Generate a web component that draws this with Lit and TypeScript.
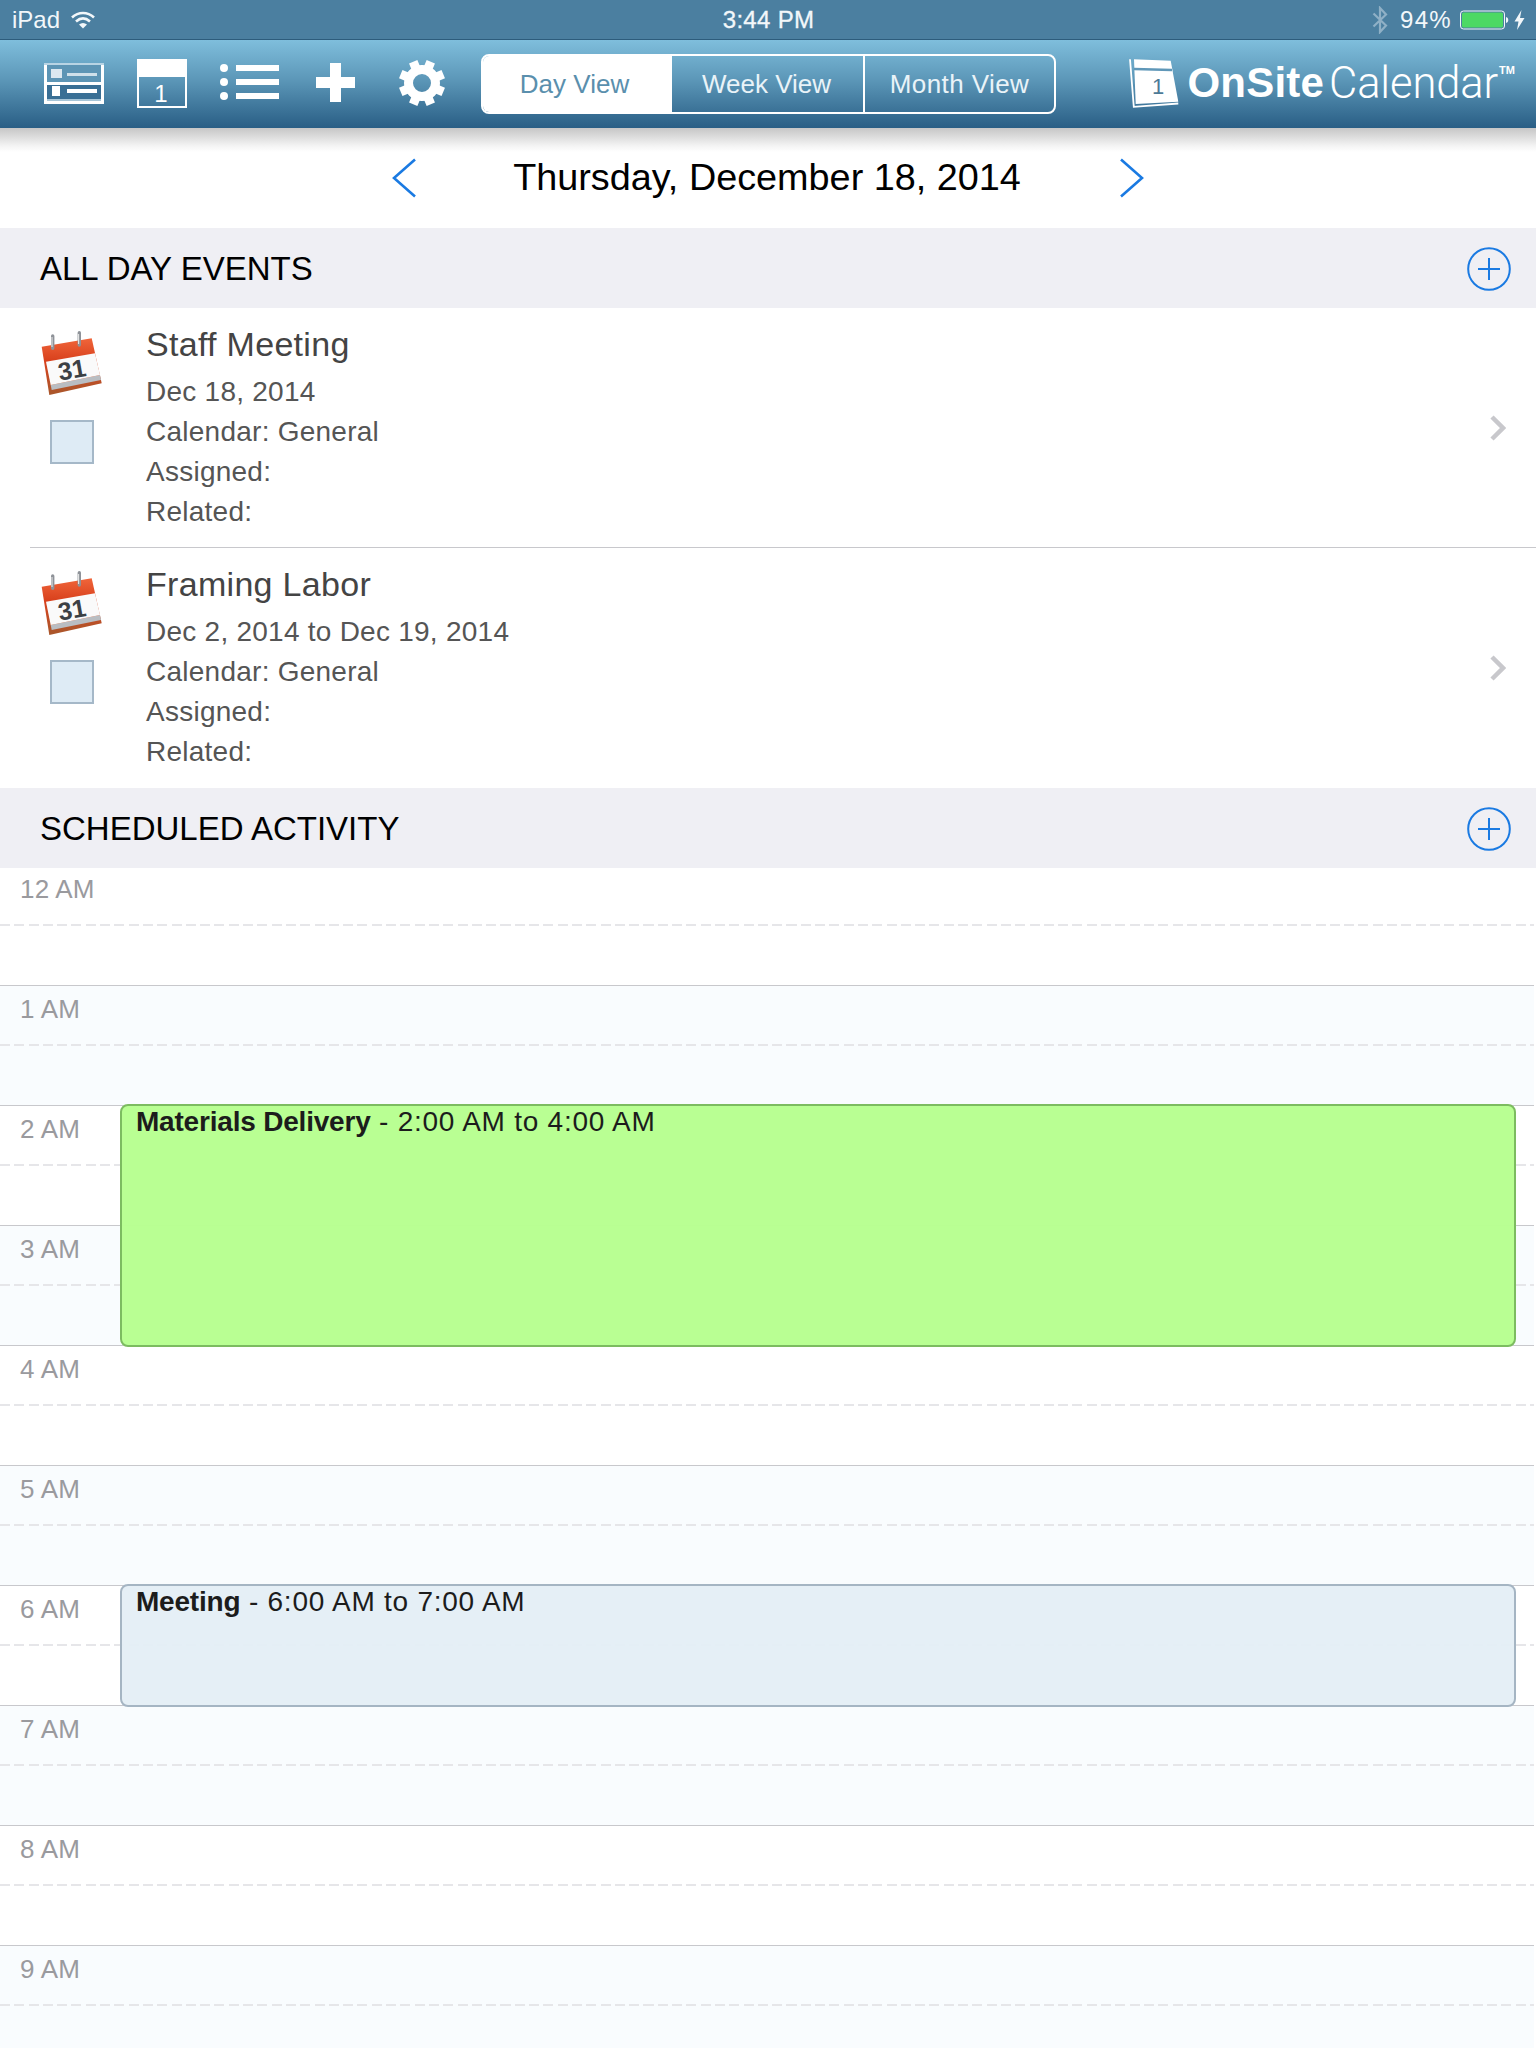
import { LitElement, html, css, svg } from 'lit'
import { customElement } from 'lit/decorators.js'

type AllDayEvent = { title: string; date: string }
type TimedEvent = { title: string; range: string; start: number; hours: number; kind: 'green' | 'blue' }

const ALL_DAY: AllDayEvent[] = [
  { title: 'Staff Meeting', date: 'Dec 18, 2014' },
  { title: 'Framing Labor', date: 'Dec 2, 2014 to Dec 19, 2014' }
]

const HOURS = ['12 AM', '1 AM', '2 AM', '3 AM', '4 AM', '5 AM', '6 AM', '7 AM', '8 AM', '9 AM']

const TIMED: TimedEvent[] = [
  { title: 'Materials Delivery', range: '2:00 AM to 4:00 AM', start: 2, hours: 2, kind: 'green' },
  { title: 'Meeting', range: '6:00 AM to 7:00 AM', start: 6, hours: 1, kind: 'blue' }
]

const HOUR_PX = 120

const plusIcon = html`
  <svg class="add" width="44" height="44" viewBox="0 0 44 44" fill="none" stroke="#1a7ae2">
    <circle cx="22" cy="22" r="20.8" stroke-width="2"></circle>
    <path d="M11 22H33M22 11V33" stroke-width="2"></path>
  </svg>
`

const eventIcon = html`
  <svg class="cal-icon" width="64" height="66" viewBox="0 0 64 66">
    <defs>
      <linearGradient id="red" x1="0" y1="0" x2="0" y2="1">
        <stop offset="0" stop-color="#f0653a"></stop>
        <stop offset="0.4" stop-color="#d8401c"></stop>
        <stop offset="1" stop-color="#a8582c"></stop>
      </linearGradient>
    </defs>
    <path d="M0.7 16.7L50.7 8.3L60.7 53.3L8.3 65Z" fill="url(#red)"></path>
    <path d="M9.7 55L59 45L60 50L10.7 60Z" fill="#b9bdc2"></path>
    <path d="M5 31.7L54 23.3L59 45L9.7 55Z" fill="#fafafa"></path>
    <path d="M11.7 6V18.3M38.3 2.7V15" stroke="#8e9298" stroke-width="3.4" stroke-linecap="round"></path>
    <path d="M11 7V17M37.6 4V14" stroke="#ececec" stroke-width="1"></path>
    <text x="31" y="48.5" text-anchor="middle" transform="rotate(-10 31 40)" class="cal-num">31</text>
  </svg>
`

const gearTeeth = [0, 45, 90, 135, 180, 225, 270, 315].map(
  a => svg`<rect x="18.5" y="0" width="9" height="9" transform="rotate(${a + 22.5} 23 23)"></rect>`
)

@customElement('app-root')
export class AppRoot extends LitElement {
  static styles = css`
    :host {
      display: block;
      height: 2048px;
      overflow: hidden;
      background: #fff;
      font-family: 'Liberation Sans', Arial, sans-serif;
      color: #000;
    }

    .status {
      box-sizing: border-box;
      height: 40px;
      display: grid;
      grid-template-columns: 1fr auto 1fr;
      align-items: center;
      padding: 0 11px 0 12px;
      background: #4b7fa0;
      border-bottom: 1px solid #2d5c7c;
      color: #f2f7fa;
      font-size: 24px;
    }
    .status-left,
    .status-right {
      display: flex;
      align-items: center;
    }
    .status-right {
      justify-content: flex-end;
    }
    .status-left svg {
      margin-left: 11px;
    }
    .time {
      letter-spacing: 0.3px;
      -webkit-text-stroke: 0.3px #f2f7fa;
    }
    .pct {
      margin: 0 8px 0 12px;
      letter-spacing: 1.3px;
    }
    .bolt {
      margin-left: 5px;
    }

    .toolbar {
      box-sizing: border-box;
      height: 88px;
      display: flex;
      align-items: center;
      padding: 0 21px 2px 44px;
      background: linear-gradient(#7fbedc, #5c97b8 45%, #295e85);
    }
    .toolbar > svg {
      flex: none;
    }
    .i-cal {
      margin-left: 33px;
    }
    .i-list {
      margin: 0 0 2px 33px;
    }
    .i-plus {
      margin: 0 0 2px 37px;
    }
    .i-gear {
      margin-left: 44px;
    }

    .segments {
      box-sizing: border-box;
      margin: 2px 0 0 36px;
      width: 575px;
      height: 60px;
      display: grid;
      grid-template-columns: 189px 191px 1fr;
      border: 2px solid #fff;
      border-radius: 8px;
      overflow: hidden;
      font-size: 26px;
      color: #e9f3f8;
    }
    .segments div {
      display: flex;
      align-items: center;
      justify-content: center;
    }
    .segments .on {
      background: #fff;
      color: #5a8fad;
      padding-right: 6px;
    }
    .segments .week {
      padding-right: 2px;
    }
    .segments .month {
      border-left: 2px solid #fff;
      letter-spacing: 0.4px;
    }

    .logo {
      margin-left: auto;
      display: flex;
      align-items: center;
      color: #fff;
    }
    .logo svg {
      margin-right: 6px;
    }
    .logo b {
      font-size: 42px;
      letter-spacing: 0.2px;
    }
    .logo span {
      margin-left: 5px;
      font-family: Roboto, 'Liberation Sans', sans-serif;
      font-weight: 300;
      font-size: 43.5px;
      letter-spacing: -0.1px;
    }
    .logo sup {
      align-self: flex-start;
      margin: 6px 0 0 1px;
      font-size: 11px;
      font-weight: 700;
    }

    .date-row {
      height: 100px;
      display: flex;
      align-items: center;
      justify-content: center;
      background: linear-gradient(#c6c6c6, #f4f4f4 18px, #fff 24px);
    }
    .date-row h1 {
      margin: 0 98px 0 96px;
      font-size: 37.8px;
      font-weight: 400;
      line-height: 1;
      white-space: nowrap;
    }

    .section {
      height: 80px;
      display: flex;
      align-items: center;
      justify-content: space-between;
      padding: 0 25px 0 40px;
      background: #efeff4;
      font-size: 33px;
    }
    .section span {
      margin-top: 1px;
    }
    .section .add {
      display: block;
      margin-top: 2px;
    }

    .row {
      box-sizing: border-box;
      height: 240px;
      display: flex;
      position: relative;
    }
    .row + .row::before {
      content: '';
      position: absolute;
      left: 30px;
      right: 0;
      top: -1px;
      height: 1px;
      background: #c8c8cc;
    }
    .row:last-child {
      border-bottom: 1px solid #c8c8cc;
    }
    .row-icons {
      flex: none;
      width: 146px;
      display: flex;
      flex-direction: column;
      padding: 22px 0 0 41px;
      box-sizing: border-box;
    }
    .cal-icon {
      display: block;
    }
    .cal-num {
      font-family: 'Liberation Sans', sans-serif;
      font-weight: 700;
      font-size: 25px;
      fill: #3c4044;
    }
    .check {
      box-sizing: border-box;
      width: 44px;
      height: 44px;
      margin: 24px 0 0 9px;
      background: #deebf5;
      border: 2px solid #a5b8c8;
    }
    .row-text {
      flex: 1;
      padding-top: 14px;
      color: #555;
      font-size: 28px;
      letter-spacing: 0.25px;
      line-height: 40px;
    }
    .row-text h2 {
      margin: 0 0 6px;
      font-size: 34px;
      font-weight: 400;
      letter-spacing: 0.3px;
      line-height: 44px;
      color: #444;
    }
    .chevron {
      align-self: center;
      flex: none;
      margin-right: 30px;
    }

    .timeline {
      position: relative;
    }
    .hour {
      box-sizing: border-box;
      width: calc(100% - 2px);
      height: 120px;
      padding: 9px 0 0 20px;
      border-bottom: 1px solid #c8c8cc;
      color: #9a9a9e;
      font-size: 26px;
      letter-spacing: 0.2px;
      line-height: 28px;
      position: relative;
    }
    .hour:first-child {
      height: 118px;
      padding-top: 7px;
    }
    .hour:nth-child(even) {
      background: #f9fcfe;
    }
    .dash {
      position: absolute;
      left: 0;
      right: 0;
      bottom: 59px;
      height: 2px;
      background: repeating-linear-gradient(90deg, #e6e6e9 0 10px, transparent 10px 14.3px);
    }

    .event {
      box-sizing: border-box;
      position: absolute;
      left: 120px;
      width: 1396px;
      padding: 1px 14px 0;
      border-radius: 8px;
      border: 2px solid;
      font-size: 28px;
      line-height: 30px;
      letter-spacing: 0.75px;
      color: #1c1c1c;
      white-space: pre;
    }
    .event b {
      letter-spacing: -0.2px;
    }
    .event.green {
      background: rgba(183, 255, 143, 0.97);
      border-color: #7cbc60;
    }
    .event.blue {
      background: rgba(228, 238, 246, 0.95);
      border-color: #a5b5c3;
    }
  `

  private renderAllDay(ev: AllDayEvent) {
    return html`
      <div class="row">
        <div class="row-icons">
          ${eventIcon}
          <div class="check"></div>
        </div>
        <div class="row-text">
          <h2>${ev.title}</h2>
          <div>${ev.date}</div>
          <div>Calendar: General</div>
          <div>Assigned:</div>
          <div>Related:</div>
        </div>
        <svg class="chevron" width="16" height="26" viewBox="0 0 16 26" fill="none" stroke="#c8c8cc" stroke-width="4.5">
          <path d="M2 2L13 13L2 24"></path>
        </svg>
      </div>
    `
  }

  private renderTimed(ev: TimedEvent) {
    const top = ev.start * HOUR_PX - 4
    const height = ev.hours * HOUR_PX + 3
    return html`
      <div class="event ${ev.kind}" style="top:${top}px;height:${height}px"><b>${ev.title}</b> - ${ev.range}</div>
    `
  }

  render() {
    return html`
      <div class="status">
        <div class="status-left">
          <span>iPad</span>
          <svg width="24" height="18" viewBox="0 0 24 18" fill="none" stroke="#f2f7fa" stroke-width="2.6">
            <path d="M1 6.5C7.5 0.5 16.5 0.5 23 6.5"></path>
            <path d="M5 10.5C9.5 6.5 14.5 6.5 19 10.5"></path>
            <path d="M12 17.5L8 13.5C10.5 11.5 13.5 11.5 16 13.5Z" fill="#f2f7fa" stroke="none"></path>
          </svg>
        </div>
        <div class="time">3:44 PM</div>
        <div class="status-right">
          <svg width="16" height="28" viewBox="0 0 16 28" fill="none" stroke="#8fb0c6" stroke-width="2.2">
            <path d="M1.5 7.5L14 19.5L8 26V2L14 8.5L1.5 20.5"></path>
          </svg>
          <span class="pct">94%</span>
          <svg width="49" height="20" viewBox="0 0 49 20">
            <rect x="0.5" y="1" width="44" height="18" rx="3" fill="none" stroke="#f2f7fa"></rect>
            <rect x="2" y="2.5" width="41" height="15" rx="1.5" fill="#4cd964"></rect>
            <path d="M46 7C49 7.5 49 12.5 46 13Z" fill="#f2f7fa"></path>
          </svg>
          <svg class="bolt" width="11" height="22" viewBox="0 0 11 20">
            <path d="M7.5 0L0.5 11.5H4.5L3 20L10.5 8H6Z" fill="#f2f7fa"></path>
          </svg>
        </div>
      </div>

      <div class="toolbar">
        <svg class="i-cards" width="60" height="41" viewBox="0 0 60 41">
          <rect width="60" height="41" fill="#fff"></rect>
          <rect y="0" width="60" height="2" fill="#b8d4e4"></rect>
          <rect x="3" y="2" width="54" height="17" fill="#5d95b5"></rect>
          <rect x="3" y="22" width="54" height="15" fill="#396f95"></rect>
          <rect x="7" y="6" width="11" height="9" fill="#dce8f0"></rect>
          <rect x="8" y="23" width="8" height="10" fill="#fff"></rect>
          <rect x="23" y="10" width="30" height="3" fill="#cfe0ea"></rect>
          <rect x="23" y="26" width="30" height="4" fill="#fff"></rect>
          <rect x="3" y="36" width="54" height="2" fill="#a8c6d8"></rect>
        </svg>
        <svg class="i-cal" width="50" height="49" viewBox="0 0 50 49">
          <rect width="50" height="17" fill="#fff"></rect>
          <rect x="1" y="17" width="48" height="31" fill="none" stroke="#fff" stroke-width="2"></rect>
          <text x="24" y="43" text-anchor="middle" font-family="Liberation Sans" font-size="24" fill="#fff">1</text>
        </svg>
        <svg class="i-list" width="59" height="36" viewBox="0 0 59 36" fill="#fff">
          <circle cx="4" cy="4" r="4"></circle>
          <circle cx="4" cy="18" r="4"></circle>
          <circle cx="4" cy="32" r="4"></circle>
          <rect x="16" y="1" width="43" height="6"></rect>
          <rect x="16" y="15" width="43" height="6"></rect>
          <rect x="16" y="29" width="43" height="6"></rect>
        </svg>
        <svg class="i-plus" width="39" height="39" viewBox="0 0 39 39" fill="#fff">
          <path d="M14 0H25V14H39V25H25V39H14V25H0V14H14Z"></path>
        </svg>
        <svg class="i-gear" width="46" height="46" viewBox="0 0 46 46" fill="#fff">
          ${gearTeeth}
          <circle cx="23" cy="23" r="13.5" fill="none" stroke="#fff" stroke-width="9"></circle>
        </svg>

        <div class="segments">
          <div class="on">Day View</div>
          <div class="week">Week View</div>
          <div class="month">Month View</div>
        </div>

        <div class="logo">
          <svg width="52" height="50" viewBox="0 0 52 50" fill="none">
            <path d="M1 1.3L4.8 48.8L49.3 45.5" stroke="#fff" stroke-width="1.8"></path>
            <path d="M5 1.3L41.7 2.7L49.3 43.7L6.7 46Z" fill="#fff"></path>
            <path d="M5 11L43 12" stroke="#5f97b8" stroke-width="2.5"></path>
            <text x="29" y="36" text-anchor="middle" font-family="Liberation Sans" font-size="22" fill="#4d7a96">1</text>
          </svg>
          <b>OnSite</b><span>Calendar</span><sup>TM</sup>
        </div>
      </div>

      <div class="date-row">
        <svg width="26" height="40" viewBox="0 0 26 40" fill="none" stroke="#1a7ae2" stroke-width="2.6">
          <path d="M24 1.5L3 20L24 38.5"></path>
        </svg>
        <h1>Thursday, December 18, 2014</h1>
        <svg width="26" height="40" viewBox="0 0 26 40" fill="none" stroke="#1a7ae2" stroke-width="2.6">
          <path d="M2 1.5L23 20L2 38.5"></path>
        </svg>
      </div>

      <div class="section"><span>ALL DAY EVENTS</span>${plusIcon}</div>
      ${ALL_DAY.map(ev => this.renderAllDay(ev))}

      <div class="section"><span>SCHEDULED ACTIVITY</span>${plusIcon}</div>
      <div class="timeline">
        ${HOURS.map(h => html`<div class="hour">${h}<div class="dash"></div></div>`)}
        ${TIMED.map(ev => this.renderTimed(ev))}
      </div>
    `
  }
}
